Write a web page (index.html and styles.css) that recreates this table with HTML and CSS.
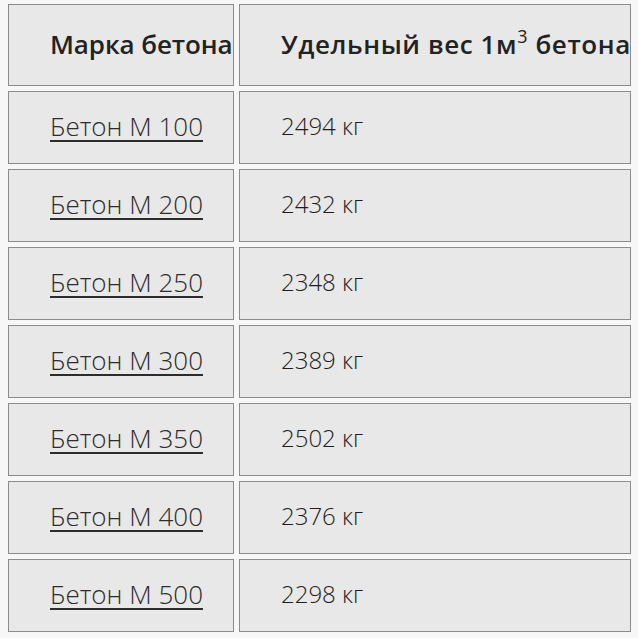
FILE: index.html
```html
<!DOCTYPE html>
<html lang="ru">
<head>
<meta charset="utf-8">
<link rel="stylesheet" href="styles.css">
</head>
<body>
<table class="grid">
  <colgroup><col class="c1"><col class="c2"></colgroup>
  <thead>
    <tr class="head">
      <th class="h1">Марка бетона</th>
      <th class="h2">Удельный вес 1м<sup>3</sup> бетона</th>
    </tr>
  </thead>
  <tbody>
    <tr><td><a href="#">Бетон М 100</a></td><td>2494 кг</td></tr>
    <tr><td><a href="#">Бетон М 200</a></td><td>2432 кг</td></tr>
    <tr><td><a href="#">Бетон М 250</a></td><td>2348 кг</td></tr>
    <tr><td><a href="#">Бетон М 300</a></td><td>2389 кг</td></tr>
    <tr><td><a href="#">Бетон М 350</a></td><td>2502 кг</td></tr>
    <tr><td><a href="#">Бетон М 400</a></td><td>2376 кг</td></tr>
    <tr><td><a href="#">Бетон М 500</a></td><td>2298 кг</td></tr>
  </tbody>
</table>
</body>
</html>
```
FILE: styles.css
```css
html, body {
  margin: 0;
  padding: 0;
  background: #f7f7f7;
}
body {
  padding: 0 0 0 3px;
  font-family: "Open Sans", "Noto Sans", sans-serif;
  color: #222;
}
.grid {
  width: 633px;
  border-collapse: separate;
  border-spacing: 5px;
  table-layout: fixed;
  margin-top: -1px;
}
.c1 { width: 226px; }
.c2 { width: 392px; }
.grid th, .grid td {
  box-sizing: border-box;
  background: #e8e8e8;
  border: 1px solid #8c8c8c;
  padding: 0 0 4px 41px;
  text-align: left;
  vertical-align: middle;
  white-space: nowrap;
  overflow: hidden;
  font-size: 24px;
}
.grid th {
  height: 82px;
  font-weight: 600;
  font-size: 26px;
  padding-bottom: 3px;
}
.grid th.h1 {
  letter-spacing: -0.1px;
}
.grid th.h2 {
  letter-spacing: 0.6px;
}
.grid th sup {
  font-size: 18px;
  line-height: 0;
  vertical-align: 11px;
  font-weight: 400;
}
.grid td {
  height: 73px;
  font-weight: 300;
  color: #1e1e1e;
}
.grid td a {
  font-size: 26px;
  color: #2c2c2c;
  text-decoration: underline;
  text-decoration-thickness: 2px;
  text-underline-offset: 4px;
}
```
